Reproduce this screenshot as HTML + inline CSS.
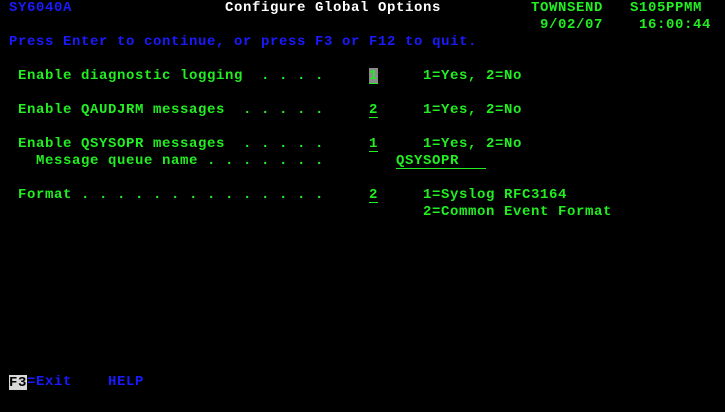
<!DOCTYPE html>
<html><head><meta charset="utf-8"><style>
html,body{margin:0;padding:0;background:#000;width:725px;height:412px;overflow:hidden}
.r{position:absolute;height:17px;line-height:17px;font-family:"Liberation Mono",monospace;font-size:14px;letter-spacing:0.6px;font-weight:bold;white-space:pre}
.b{color:#1a1aff}.g{color:#22ee22}.w{color:#fff}
.u{border-bottom:1px solid #22ee22;display:inline-block;height:15px}
</style></head><body>
<div class="r b" style="left:9px;top:0">SY6040A</div>
<div class="r w" style="left:225px;top:0">Configure Global Options</div>
<div class="r g" style="left:531px;top:0">TOWNSEND</div>
<div class="r g" style="left:630px;top:0">S105PPMM</div>
<div class="r g" style="left:540px;top:17px">9/02/07</div>
<div class="r g" style="left:639px;top:17px">16:00:44</div>
<div class="r b" style="left:9px;top:34px">Press Enter to continue, or press F3 or F12 to quit.</div>

<div class="r g" style="left:18px;top:68px">Enable diagnostic logging  . . . .</div>
<div style="position:absolute;left:369px;top:68px;width:9px;height:16px;background:#8a8a8a"></div>
<div class="r g" style="left:369px;top:68px"><span class="u">1</span></div>
<div class="r g" style="left:423px;top:68px">1=Yes, 2=No</div>

<div class="r g" style="left:18px;top:102px">Enable QAUDJRM messages  . . . . .</div>
<div class="r g" style="left:369px;top:102px"><span class="u">2</span></div>
<div class="r g" style="left:423px;top:102px">1=Yes, 2=No</div>

<div class="r g" style="left:18px;top:136px">Enable QSYSOPR messages  . . . . .</div>
<div class="r g" style="left:369px;top:136px"><span class="u">1</span></div>
<div class="r g" style="left:423px;top:136px">1=Yes, 2=No</div>
<div class="r g" style="left:36px;top:153px">Message queue name . . . . . . .</div>
<div class="r g" style="left:396px;top:153px"><span class="u">QSYSOPR   </span></div>

<div class="r g" style="left:18px;top:187px">Format . . . . . . . . . . . . . .</div>
<div class="r g" style="left:369px;top:187px"><span class="u">2</span></div>
<div class="r g" style="left:423px;top:187px">1=Syslog RFC3164</div>
<div class="r g" style="left:423px;top:204px">2=Common Event Format</div>

<div class="r" style="left:9px;top:375px;color:#000;background:#d8d8d8;height:15px;line-height:16px">F3</div>
<div class="r b" style="left:27px;top:374px">=Exit</div>
<div class="r b" style="left:108px;top:374px">HELP</div>
</body></html>
